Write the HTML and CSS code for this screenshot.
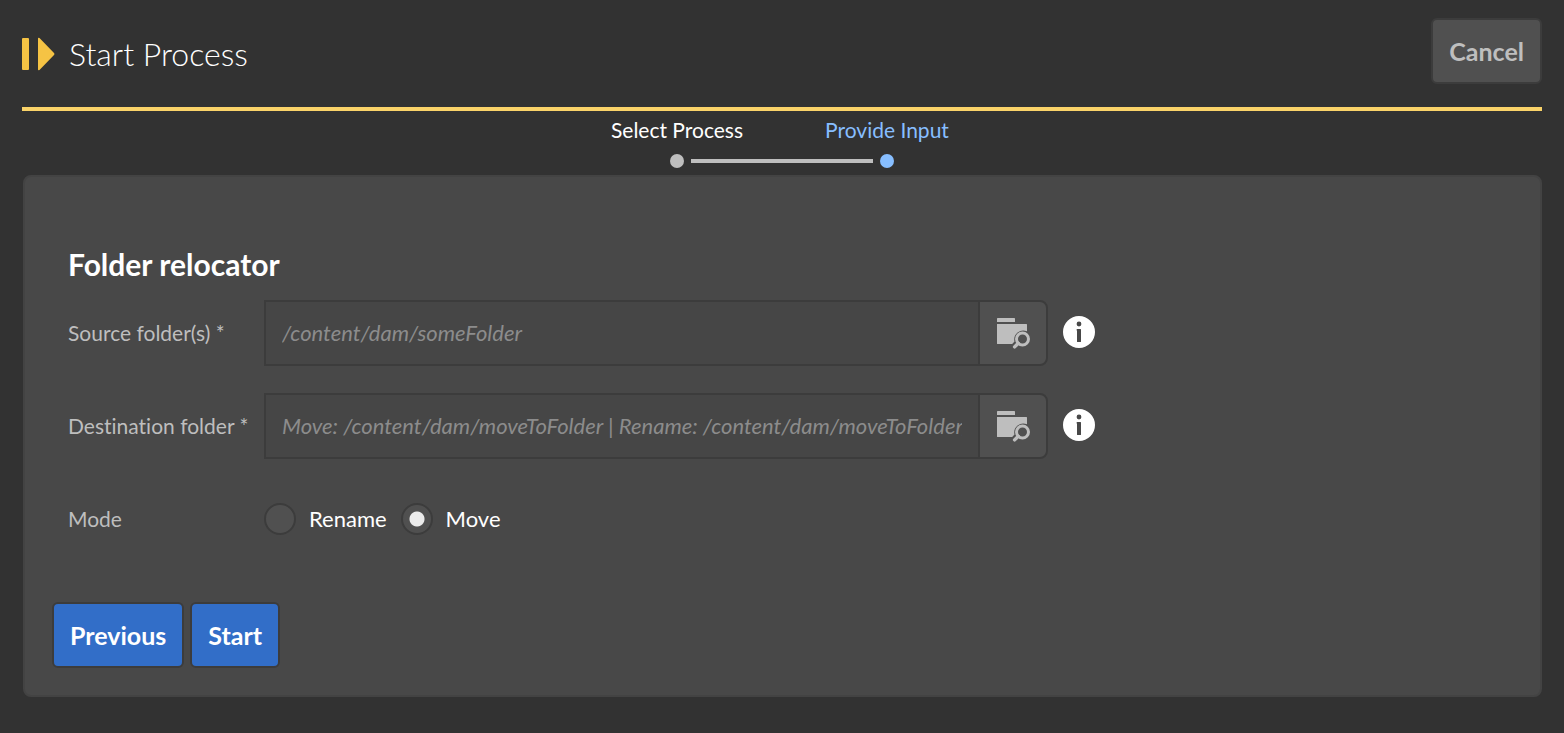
FILE: index.html
```html
<!DOCTYPE html>
<html lang="en">
<head>
<meta charset="utf-8">
<meta name="viewport" content="width=device-width, initial-scale=1">
<title>Start Process</title>
<link rel="stylesheet" href="styles.css">
</head>
<body>
<svg class="sprite" aria-hidden="true">
  <symbol id="icon-browse" viewBox="0 0 34 34">
    <path d="M1 2.600Q1 2 1.600 2H18.400Q19 2 19 2.600V6H1z"/>
    <path d="M1 8H30.400Q31 8 31 8.600V15.300A9 9 0 0 0 18.500 25.500L16.200 28H1.600Q1 28 1 27.400z"/>
    <circle cx="26.500" cy="23" r="6" fill="none" stroke="currentColor" stroke-width="3"/>
    <path d="M22.200 27.300L18.600 30.900" fill="none" stroke="currentColor" stroke-width="3.400" stroke-linecap="round"/>
  </symbol>
  <symbol id="icon-info" viewBox="0 0 32 32">
    <path fill-rule="evenodd" d="M16 0a16 16 0 1 0 0 32a16 16 0 1 0 0-32zM16 5.600a2.400 2.400 0 1 1 0 4.800a2.400 2.400 0 1 1 0-4.800zM14.200 13H17.400Q18 13 18 13.600V25.400Q18 26 17.400 26H14.600Q14 26 14 25.400V14.600H13.600V13.600Q13.600 13 14.200 13z"/>
  </symbol>
</svg>

<header class="header">
  <h1 class="title">
    <svg class="title-icon" viewBox="0 0 34 34" aria-hidden="true">
      <rect x="0" y="1" width="7" height="32" rx="1"/>
      <path d="M16 1.500Q16 .5 17.500 1L32 16Q33 17 32 18L17.500 33Q16 33.500 16 32.500z"/>
    </svg>
    Start Process
  </h1>
  <button class="button button-quiet" type="button">Cancel</button>
</header>

<main class="main">
  <ol class="steps">
    <li class="step">Select Process<span class="dot"></span></li>
    <li class="step step-current" aria-current="step">Provide Input<span class="dot"></span></li>
  </ol>

  <form class="panel">
    <div class="fields">
      <h2 class="heading">Folder relocator</h2>

      <div class="row">
        <label class="label" for="source">Source folder(s) *</label>
        <div class="picker">
          <input class="input" id="source" type="text" placeholder="/content/dam/someFolder">
          <button class="browse" type="button" aria-label="Browse source folders"><svg class="browse-icon"><use href="#icon-browse"/></svg></button>
        </div>
        <button class="info" type="button" aria-label="About source folders"><svg class="info-icon"><use href="#icon-info"/></svg></button>
      </div>

      <div class="row">
        <label class="label" for="destination">Destination folder *</label>
        <div class="picker">
          <input class="input" id="destination" type="text" placeholder="Move: /content/dam/moveToFolder | Rename: /content/dam/moveToFolder/newName">
          <button class="browse" type="button" aria-label="Browse destination folder"><svg class="browse-icon"><use href="#icon-browse"/></svg></button>
        </div>
        <button class="info" type="button" aria-label="About destination folder"><svg class="info-icon"><use href="#icon-info"/></svg></button>
      </div>

      <div class="row" role="radiogroup" aria-labelledby="mode-label">
        <span class="label" id="mode-label">Mode</span>
        <div class="options">
          <label class="option"><input class="radio" type="radio" name="mode" value="rename">Rename</label>
          <label class="option"><input class="radio" type="radio" name="mode" value="move" checked>Move</label>
        </div>
      </div>
    </div>

    <div class="actions">
      <button class="button button-primary" type="button">Previous</button>
      <button class="button button-primary" type="submit">Start</button>
    </div>
  </form>
</main>
</body>
</html>
```
FILE: styles.css
```css
* {
  box-sizing: border-box;
}

body {
  margin: 0;
  padding: 0 22px 36px;
  background: #323232;
  color: #fff;
  font-family: Lato, "Open Sans", sans-serif;
  font-size: 22px;
  font-variant-ligatures: none;
  line-height: 32px;
}

button,
input {
  font: inherit;
}

.sprite {
  display: none;
}

.header {
  display: flex;
  align-items: flex-start;
  justify-content: space-between;
  padding: 18px 0 23px;
  border-bottom: 4px solid #fad369;
}

.title {
  display: flex;
  align-items: center;
  gap: 13px;
  margin: 0;
  padding-top: 16px;
  font-size: 32px;
  font-weight: 300;
  line-height: 40px;
}

.title-icon {
  width: 34px;
  height: 34px;
  fill: #f5c344;
}

.button {
  height: 66px;
  padding: 0 16px;
  border: 2px solid #3c3c3c;
  border-radius: 6px;
  font-size: 25px;
  font-weight: 700;
}

.button-quiet {
  background: #505050;
  color: #bebebe;
}

.button-primary {
  background: #326ec8;
  color: #fff;
}

.steps {
  display: flex;
  justify-content: center;
  margin: 0;
  padding: 3px 0 7px;
  list-style: none;
}

.step {
  position: relative;
  display: flex;
  flex-direction: column;
  align-items: center;
  gap: 8px;
  width: 210px;
  font-size: 21px;
}

.step-current {
  color: #87beff;
}

.dot {
  width: 14px;
  height: 14px;
  border-radius: 50%;
  background: #bebebe;
}

.step-current .dot {
  background: #87beff;
}

.step-current::before {
  content: "";
  position: absolute;
  right: 119px;
  bottom: 5px;
  width: 182px;
  height: 4px;
  background: #bebebe;
}

.panel {
  margin-left: 1px;
  padding: 67px 27px 27px;
  border: 2px solid #434343;
  border-radius: 8px;
  background: #484848;
}

.fields {
  display: flex;
  flex-direction: column;
  gap: 27px;
  padding: 0 16px;
}

.heading {
  margin: 0 0 -11px;
  font-size: 30px;
  font-weight: 700;
  line-height: 40px;
}

.row {
  display: flex;
  align-items: center;
  min-height: 66px;
}

.label {
  flex: 0 0 196px;
  color: #bebebe;
  font-size: 21px;
}

.picker {
  display: flex;
  flex: 0 1 784px;
  min-width: 0;
}

.input {
  flex: 1;
  min-width: 0;
  height: 66px;
  padding: 0 16px 2px;
  border: 2px solid #3c3c3c;
  border-right: 0;
  border-radius: 0;
  background: #464646;
  color: #fff;
}

.input::placeholder {
  color: #8c8c8c;
  font-style: italic;
  opacity: 1;
}

.browse {
  display: flex;
  align-items: center;
  justify-content: center;
  width: 70px;
  height: 66px;
  padding: 0;
  border: 2px solid #3c3c3c;
  border-radius: 0 8px 8px 0;
  background: #505050;
  color: #bebebe;
}

.browse-icon {
  width: 34px;
  height: 34px;
  fill: currentColor;
}

.info {
  display: flex;
  margin-left: 15px;
  padding: 0 0 2px;
  border: 0;
  background: none;
  color: #fff;
}

.info-icon {
  width: 32px;
  height: 32px;
  fill: currentColor;
}

.options {
  display: flex;
  gap: 14px;
}

.option {
  display: flex;
  align-items: center;
  gap: 13px;
}

.radio {
  width: 32px;
  height: 32px;
  margin: 0;
  appearance: none;
  border: 2px solid #3c3c3c;
  border-radius: 50%;
  background: #505050;
}

.radio:checked {
  background: radial-gradient(circle, #ebebeb 7px, #505050 8px);
}

.actions {
  display: flex;
  gap: 6px;
  margin-top: 50px;
}
```
